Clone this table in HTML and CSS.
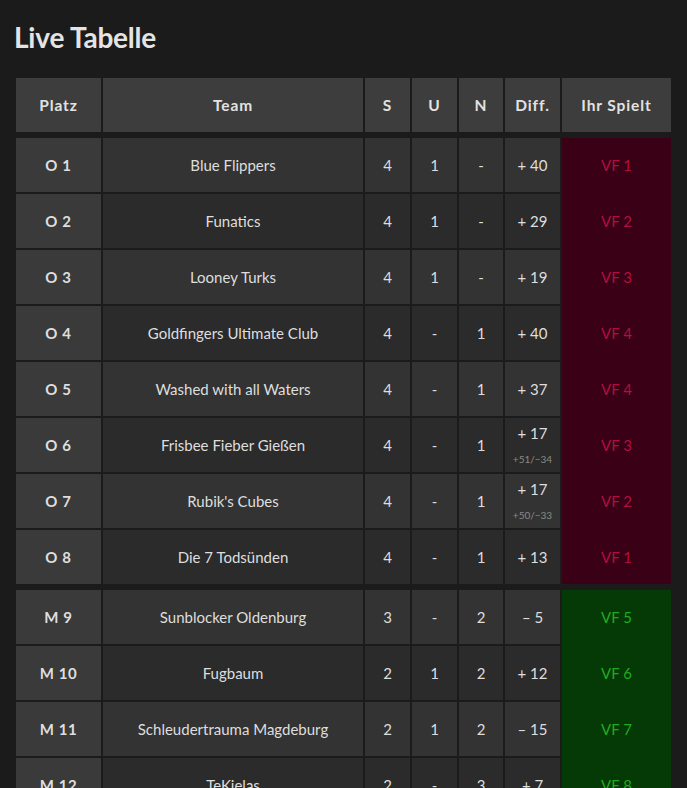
FILE: index.html
```html
<!DOCTYPE html>
<html lang="de">
<head>
<meta charset="utf-8">
<title>Live Tabelle</title>
<link rel="stylesheet" href="styles.css">
</head>
<body>
<main class="page">
  <h1 class="title">Live Tabelle</h1>
  <table class="standings">
    <colgroup>
      <col class="c-platz"><col class="c-team"><col class="c-num"><col class="c-num"><col class="c-num2"><col class="c-diff"><col class="c-vs">
    </colgroup>
    <thead>
      <tr>
        <th>Platz</th><th>Team</th><th>S</th><th>U</th><th>N</th><th>Diff.</th><th>Ihr Spielt</th>
      </tr>
    </thead>
    <tbody class="group group-o">
      <tr><td class="platz">O 1</td><td>Blue Flippers</td><td>4</td><td>1</td><td>-</td><td>+ 40</td><td class="vs">VF 1</td></tr>
      <tr><td class="platz">O 2</td><td>Funatics</td><td>4</td><td>1</td><td>-</td><td>+ 29</td><td class="vs">VF 2</td></tr>
      <tr><td class="platz">O 3</td><td>Looney Turks</td><td>4</td><td>1</td><td>-</td><td>+ 19</td><td class="vs">VF 3</td></tr>
      <tr><td class="platz">O 4</td><td>Goldfingers Ultimate Club</td><td>4</td><td>-</td><td>1</td><td>+ 40</td><td class="vs">VF 4</td></tr>
      <tr><td class="platz">O 5</td><td>Washed with all Waters</td><td>4</td><td>-</td><td>1</td><td>+ 37</td><td class="vs">VF 4</td></tr>
      <tr><td class="platz">O 6</td><td>Frisbee Fieber Gießen</td><td>4</td><td>-</td><td>1</td><td class="diff-split"><span class="d-main">+ 17</span><span class="d-sub">+51/−34</span></td><td class="vs">VF 3</td></tr>
      <tr><td class="platz">O 7</td><td>Rubik's Cubes</td><td>4</td><td>-</td><td>1</td><td class="diff-split"><span class="d-main">+ 17</span><span class="d-sub">+50/−33</span></td><td class="vs">VF 2</td></tr>
      <tr><td class="platz">O 8</td><td>Die 7 Todsünden</td><td>4</td><td>-</td><td>1</td><td>+ 13</td><td class="vs">VF 1</td></tr>
    </tbody>
    <tbody class="group group-m">
      <tr><td class="platz">M 9</td><td>Sunblocker Oldenburg</td><td>3</td><td>-</td><td>2</td><td>– 5</td><td class="vs">VF 5</td></tr>
      <tr><td class="platz">M 10</td><td>Fugbaum</td><td>2</td><td>1</td><td>2</td><td>+ 12</td><td class="vs">VF 6</td></tr>
      <tr><td class="platz">M 11</td><td>Schleudertrauma Magdeburg</td><td>2</td><td>1</td><td>2</td><td>– 15</td><td class="vs">VF 7</td></tr>
      <tr><td class="platz">M 12</td><td>TeKielas</td><td>2</td><td>-</td><td>3</td><td>+ 7</td><td class="vs">VF 8</td></tr>
    </tbody>
  </table>
</main>
</body>
</html>
```

FILE: styles.css
```css
html, body {
  margin: 0;
  padding: 0;
  background: #1b1b1b;
}

body {
  font-family: Lato, "Open Sans", "Noto Sans", sans-serif;
  color: #dedede;
}

.page {
  padding: 0 14px;
}

.title {
  margin: 0;
  padding: 20px 0 0 0;
  height: 78px;
  box-sizing: border-box;
  font-size: 28px;
  line-height: 34px;
  font-weight: 700;
  letter-spacing: -0.2px;
  color: #e4e4e4;
}

.standings {
  border-collapse: separate;
  border-spacing: 2px 0;
  table-layout: fixed;
  width: 659px;
  font-size: 15px;
}

.c-platz { width: 85px; }
.c-team { width: 260px; }
.c-num { width: 45px; }
.c-num2 { width: 44px; }
.c-diff { width: 55px; }
.c-vs { width: 109px; }

.standings th,
.standings td {
  padding: 0;
  height: 54px;
  text-align: center;
  vertical-align: middle;
  box-sizing: border-box;
}

.standings th {
  background: #3d3d3d;
  font-size: 15.5px;
  font-weight: 700;
  letter-spacing: 0.9px;
  color: #e2e2e2;
}

.standings td {
  border-top: 2px solid #1b1b1b;
  height: 56px;
  background: #333333;
}

.group tr:first-child td {
  border-top-width: 6px;
  height: 60px;
}

.group tr:nth-child(even) td {
  background: #2b2b2b;
}

.standings td.platz,
.group tr:nth-child(even) td.platz {
  background: #3a3a3a;
  font-weight: 700;
  letter-spacing: 0.6px;
}

.group-o td.vs,
.group-o tr:nth-child(even) td.vs {
  background: #3a0016;
  color: #b0103f;
}

.group-m td.vs,
.group-m tr:nth-child(even) td.vs {
  background: #053a06;
  color: #22aa22;
}

.group tr + tr td.vs {
  border-top-color: transparent;
}

.diff-split {
  line-height: 1;
}

.d-main {
  display: block;
}

.d-sub {
  display: block;
  margin-top: 13px;
  font-size: 10px;
  color: #8a8a8a;
}
```
